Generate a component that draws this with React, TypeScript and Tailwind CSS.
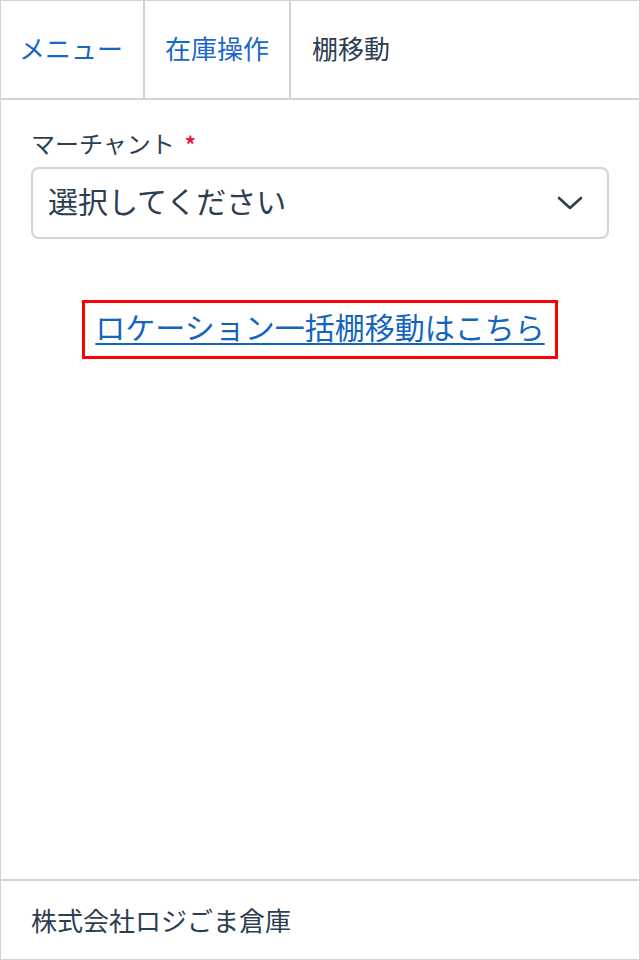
import React from "react";

const font = { fontFamily: '"Noto Sans CJK JP", "Noto Sans", sans-serif' };

export default function App() {
  return (
    <div
      className="w-[640px] h-[960px] flex flex-col border border-[#cfd4da] bg-white text-[#2c3e50]"
      style={font}
    >
      {/* header tabs */}
      <div className="h-[99px] shrink-0 flex border-b-2 border-[#cfd4da]">
        <div className="pl-[18px] pr-[20px] pb-[5px] flex items-center border-r-2 border-[#cfd4da] text-[26px] text-[#1a66c9]">
          メニュー
        </div>
        <div className="px-[20px] pb-[5px] flex items-center border-r-2 border-[#cfd4da] text-[26px] text-[#1a66c9]">
          在庫操作
        </div>
        <div className="px-[21px] pb-[5px] flex items-center text-[26px]">棚移動</div>
      </div>

      {/* body */}
      <div className="flex-1 px-[30px] pt-[25px]">
        <div className="flex items-center gap-[10px] text-[24px] leading-[36px]">
          <span>マーチャント</span>
          <span className="text-[#e8174a] text-[22px] font-bold">*</span>
        </div>
        <div className="mt-[6px] h-[72px] flex items-center justify-between pl-[15px] pr-[24px] border-2 border-[#cfd4da] rounded-lg">
          <span className="text-[30px] pb-[5px]">選択してください</span>
          <svg width="26" height="16" viewBox="0 0 26 16" fill="none">
            <path d="M2 3 L13 13 L24 3" stroke="#2c3e50" strokeWidth="2.6" strokeLinecap="round" strokeLinejoin="round" />
          </svg>
        </div>

        <div className="mt-[61px] flex justify-center">
          <div className="border-[3px] border-[#ff0000] px-[10px] pt-[1px] pb-[7px]">
            <a
              href="#"
              className="block text-[30px] leading-[45px] text-[#1565c0] underline decoration-2 underline-offset-[4px]"
            >
              ロケーション一括棚移動はこちら
            </a>
          </div>
        </div>
      </div>

      {/* footer */}
      <div className="h-[80px] shrink-0 flex items-center px-[30px] pb-[2px] border-t-2 border-[#cfd4da] text-[26px]">
        株式会社ロジごま倉庫
      </div>
    </div>
  );
}
